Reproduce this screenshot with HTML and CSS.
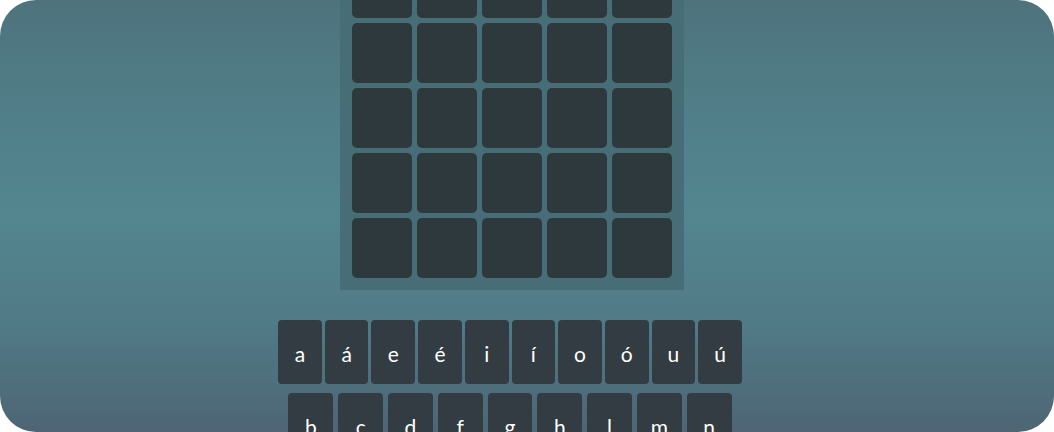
FILE: index.html
```html
<!DOCTYPE html>
<html lang="es">
<head>
<meta charset="utf-8">
<title>Palabra</title>
<link rel="stylesheet" href="styles.css">
</head>
<body>
<div class="app">
  <main class="stage">
    <section class="board">
      <div class="tile"></div><div class="tile"></div><div class="tile"></div><div class="tile"></div><div class="tile"></div>
      <div class="tile"></div><div class="tile"></div><div class="tile"></div><div class="tile"></div><div class="tile"></div>
      <div class="tile"></div><div class="tile"></div><div class="tile"></div><div class="tile"></div><div class="tile"></div>
      <div class="tile"></div><div class="tile"></div><div class="tile"></div><div class="tile"></div><div class="tile"></div>
      <div class="tile"></div><div class="tile"></div><div class="tile"></div><div class="tile"></div><div class="tile"></div>
    </section>
    <section class="keyboard">
      <div class="row row-vowels">
        <button class="key">a</button><button class="key">á</button><button class="key">e</button><button class="key">é</button><button class="key">i</button><button class="key">í</button><button class="key">o</button><button class="key">ó</button><button class="key">u</button><button class="key">ú</button>
      </div>
      <div class="row row-cons">
        <button class="key">b</button><button class="key">c</button><button class="key">d</button><button class="key">f</button><button class="key">g</button><button class="key">h</button><button class="key">l</button><button class="key">m</button><button class="key">n</button>
      </div>
    </section>
  </main>
</div>
</body>
</html>
```

FILE: styles.css
```css
html, body {
  margin: 0;
  padding: 0;
  background: #ffffff;
}

.app {
  width: 1054px;
  height: 432px;
  border-radius: 36px;
  overflow: hidden;
  background: linear-gradient(to bottom, #4e737d 0%, #51808a 30%, #53868f 50%, #507a86 75%, #4e6574 100%);
  font-family: Lato, "Noto Sans", sans-serif;
}

.stage {
  display: flex;
  flex-direction: column;
  align-items: center;
  padding-right: 30px;
  margin-top: -54px;
}

.board {
  display: grid;
  grid-template-columns: repeat(5, 60px);
  grid-auto-rows: 60px;
  gap: 5px;
  padding: 12px;
  background: #476d77;
}

.tile {
  background: #2e393e;
  border-radius: 5px;
}

.keyboard {
  margin-top: 30px;
  margin-right: 4px;
  display: flex;
  flex-direction: column;
  align-items: center;
  gap: 9px;
}

.row {
  display: flex;
}

.row-vowels {
  gap: 3px;
}

.row-vowels .key {
  width: 43.7px;
  height: 64px;
}

.row-cons {
  gap: 4.9px;
}

.row-cons .key {
  width: 44.9px;
  height: 64px;
}

.key {
  border: none;
  margin: 0;
  padding: 0;
  background: #333c42;
  color: #ffffff;
  border-radius: 4px;
  font-family: Lato, "Noto Sans", sans-serif;
  font-size: 21px;
  line-height: 1;
  display: flex;
  align-items: center;
  justify-content: center;
  padding-top: 3px;
  box-sizing: border-box;
}
```
